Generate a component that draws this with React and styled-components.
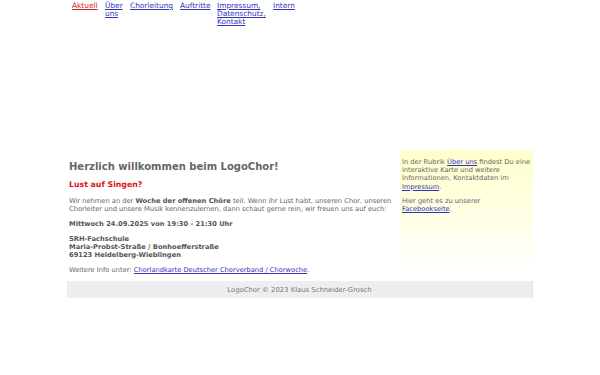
import React from "react";
import styled, { createGlobalStyle } from "styled-components";

const Global = createGlobalStyle`
  html, body { margin: 0; padding: 0; background: #fff; }
  body { font-family: "DejaVu Sans", Verdana, sans-serif; color: #666; }
  a { color: #3333bb; }
`;

const Page = styled.div`
  width: 466px;
  margin-left: 67px;
`;

const Nav = styled.ul`
  list-style: none;
  margin: 0;
  padding: 2px 0 0 5px;
  display: flex;
  align-items: flex-start;
  gap: 7px;
  height: 28px;
`;

const NavItem = styled.li`
  width: ${(p) => p.$w}px;
  font-size: 7.4px;
  line-height: 8px;
  a { color: ${(p) => (p.$active ? "#dd2222" : "#3333bb")}; }
`;

const Banner = styled.div`
  height: 120px;
`;

const Body = styled.div`
  display: flex;
  align-items: flex-start;
`;

const Main = styled.main`
  flex: 1;
  padding: 0 4px 0 2px;
`;

const H1 = styled.h1`
  margin: 10px 0 0;
  font-size: 10px;
  line-height: 14px;
  color: #666;
  font-weight: bold;
`;

const H2 = styled.h2`
  margin: 5px 0 0;
  font-size: 7.8px;
  line-height: 11px;
  color: #dd1111;
  font-weight: bold;
`;

const P = styled.p`
  margin: ${(p) => p.$mt ?? 7}px 0 0;
  font-size: 6.7px;
  line-height: 8px;
  color: ${(p) => (p.$strong ? "#555" : "#666")};
  font-weight: ${(p) => (p.$strong ? "bold" : "normal")};
  b { color: #555; }
`;

const Side = styled.aside`
  width: 129px;
  height: 110px;
  padding: 8px 2px 0 2px;
  background: linear-gradient(to bottom, #ffffcc 0%, #ffffe6 60%, #ffffff 100%);
  font-size: 6.7px;
  line-height: 8.2px;
  color: #666;
`;

const SideP = styled.p`
  margin: 0 0 6px;
`;

const Footer = styled.footer`
  margin-top: 7px;
  height: 17px;
  background: #eeeeee;
  border-right: 1px solid #e2e2e2;
  display: flex;
  align-items: center;
  justify-content: center;
  font-size: 6.85px;
  color: #777;
`;

const navItems = [
  { label: "Aktuell", w: 26, active: true },
  { label: "Über uns", w: 18 },
  { label: "Chorleitung", w: 43 },
  { label: "Auftritte", w: 30 },
  { label: "Impressum, Datenschutz, Kontakt", w: 49 },
  { label: "Intern", w: 30 },
];

export default function App() {
  return (
    <>
      <Global />
      <Page>
        <Nav>
          {navItems.map((n) => (
            <NavItem key={n.label} $w={n.w} $active={n.active}>
              <a href="#">{n.label}</a>
            </NavItem>
          ))}
        </Nav>
        <Banner />
        <Body>
          <Main>
            <H1>Herzlich willkommen beim LogoChor!</H1>
            <H2>Lust auf Singen?</H2>
            <P $mt={7}>
              Wir nehmen an der <b>Woche der offenen Chöre</b> teil. Wenn ihr Lust habt, unseren Chor, unseren Chorleiter und unsere Musik kennenzulernen, dann schaut gerne rein, wir freuen uns auf euch:
            </P>
            <P $strong>Mittwoch 24.09.2025 von 19:30 - 21:30 Uhr</P>
            <P $strong>
              SRH-Fachschule
              <br />
              Maria-Probst-Straße / Bonhoefferstraße
              <br />
              69123 Heidelberg-Wieblingen
            </P>
            <P>
              Weitere Info unter: <a href="#">Chorlandkarte Deutscher Chorverband / Chorwoche</a>.
            </P>
          </Main>
          <Side>
            <SideP>
              In der Rubrik <a href="#">Über uns</a> findest Du eine interaktive Karte und weitere Informationen, Kontaktdaten im <a href="#">Impressum</a>.
            </SideP>
            <SideP>
              Hier geht es zu unserer
              <br />
              <a href="#">Facebookseite</a>.
            </SideP>
          </Side>
        </Body>
        <Footer>LogoChor © 2023 Klaus Schneider-Grosch</Footer>
      </Page>
    </>
  );
}
